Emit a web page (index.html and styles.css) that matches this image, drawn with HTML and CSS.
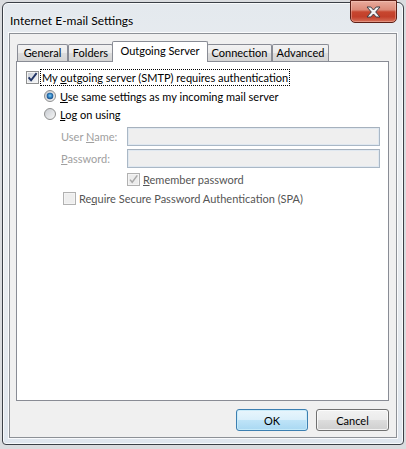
FILE: index.html
```html
<!DOCTYPE html>
<html>
<head>
<meta charset="utf-8">
<title>Internet E-mail Settings</title>
<link rel="stylesheet" href="styles.css">
</head>
<body>
<div class="window">
  <div class="titlebar">
    <span class="title">Internet E-mail Settings</span>
    <div class="close">
      <svg width="15" height="12" viewBox="0 0 15 12">
        <path d="M1 1 H4.8 L7.5 4 L10.2 1 H14 L9.7 6 L14 11 H10.2 L7.5 8 L4.8 11 H1 L5.3 6 Z" fill="#f4f4f4" stroke="#3c3c44" stroke-width="1" stroke-linejoin="round"/>
      </svg>
    </div>
  </div>
  <div class="client">
    <div class="tabs">
      <div class="tab t-general">General</div>
      <div class="tab t-folders">Folders</div>
      <div class="tab active">Outgoing Server</div>
      <div class="tab t-connection">Connection</div>
      <div class="tab t-advanced">Advanced</div>
    </div>
    <div class="panel">
      <div class="row row-auth">
        <svg class="box" width="13" height="13" viewBox="0 0 13 13">
          <defs><linearGradient id="g1" x1="0" y1="0" x2="1" y2="1"><stop offset="0" stop-color="#c9ced6"/><stop offset="1" stop-color="#f5f6f8"/></linearGradient></defs>
          <rect x="0.5" y="0.5" width="12" height="12" fill="#f4f4f4" stroke="#8e8f8f"/>
          <rect x="2" y="2" width="9" height="9" fill="url(#g1)"/>
          <path d="M2.6 6.3 L5.1 9.3 L10.6 2.2" fill="none" stroke="#1f3364" stroke-width="1.9"/>
        </svg>
        <span class="focus">My <u>o</u>utgoing server (SMTP) requires authentication</span>
      </div>
      <div class="row row-radio1">
        <svg class="radio" width="12" height="12" viewBox="0 0 12 12">
          <defs>
            <linearGradient id="g2" x1="0" y1="0" x2="1" y2="1"><stop offset="0" stop-color="#c5c9cf"/><stop offset="1" stop-color="#f6f6f6"/></linearGradient>
            <radialGradient id="g3" cx="0.5" cy="0.45" r="0.6"><stop offset="0" stop-color="#7fd0f6"/><stop offset="0.55" stop-color="#2b77b8"/><stop offset="1" stop-color="#153d73"/></radialGradient>
          </defs>
          <circle cx="6" cy="6" r="5.5" fill="url(#g2)" stroke="#8e8f8f"/>
          <circle cx="6" cy="6" r="3.3" fill="url(#g3)"/>
        </svg>
        <span class="lbl"><u>U</u>se same settings as my incoming mail server</span>
      </div>
      <div class="row row-radio2">
        <svg class="radio" width="12" height="12" viewBox="0 0 12 12">
          <defs><linearGradient id="g4" x1="0" y1="0" x2="1" y2="1"><stop offset="0" stop-color="#c5c9cf"/><stop offset="1" stop-color="#f8f8f8"/></linearGradient></defs>
          <circle cx="6" cy="6" r="5.5" fill="url(#g4)" stroke="#8e8f8f"/>
        </svg>
        <span class="lbl"><u>L</u>og on using</span>
      </div>
      <div class="row row-field row-user">
        <span class="field-label">User <u>N</u>ame:</span>
        <div class="textbox"></div>
      </div>
      <div class="row row-field row-pass">
        <span class="field-label"><u>P</u>assword:</span>
        <div class="textbox"></div>
      </div>
      <div class="row row-remember">
        <svg class="box" width="13" height="13" viewBox="0 0 13 13">
          <rect x="0.5" y="0.5" width="12" height="12" fill="#f4f4f4" stroke="#b1b1b1"/>
          <rect x="2" y="2" width="9" height="9" fill="#ececec"/>
          <path d="M3 6.6 L5.2 9.3 L10.3 2.4" fill="none" stroke="#a8a8a8" stroke-width="1.5"/>
        </svg>
        <span class="lbl dim"><u>R</u>emember password</span>
      </div>
      <div class="row row-spa">
        <svg class="box" width="13" height="13" viewBox="0 0 13 13">
          <rect x="0.5" y="0.5" width="12" height="12" fill="#f4f4f4" stroke="#b1b1b1"/>
          <rect x="2" y="2" width="9" height="9" fill="#eeeeee"/>
        </svg>
        <span class="lbl dim">Re<u>q</u>uire Secure Password Authentication (SPA)</span>
      </div>
    </div>
    <div class="buttons">
      <button class="btn btn-default">OK</button>
      <button class="btn">Cancel</button>
    </div>
  </div>
</div>
</body>
</html>
```

FILE: styles.css
```css
* { box-sizing: border-box; }
html, body { margin: 0; padding: 0; }
body {
  width: 406px;
  height: 449px;
  overflow: hidden;
  background: #dadcdf;
  font-family: Lato, "Noto Sans", sans-serif;
  font-size: 11px;
  color: #000;
}
u { text-decoration: underline; text-underline-offset: 1px; }

.window {
  margin: 2px 2px 0 2px;
  height: 443px;
  border: 1px solid #3b4047;
  border-radius: 6px 6px 4px 4px;
  background: linear-gradient(180deg, #e4e9ee 0%, #eceff2 35%, #e7ebef 70%, #dfe6ee 100%);
  box-shadow: inset 0 0 0 1px rgba(255,255,255,0.75);
  padding: 0 6px 6px 6px;
  display: flex;
  flex-direction: column;
}

.titlebar {
  height: 30px;
  display: flex;
  align-items: flex-start;
  justify-content: space-between;
}
.title {
  font-size: 12px;
  line-height: 15px;
  margin-top: 10px;
  margin-left: 1px;
  text-shadow: 0 0 4px rgba(255,255,255,0.9);
}
.close {
  width: 47px;
  height: 23px;
  margin-top: -3px;
  border: 1px solid #5e2017;
  border-radius: 0 0 5px 5px;
  background: linear-gradient(180deg, #e9ab9d 0%, #dc8a78 42%, #c7462f 52%, #c23f2a 75%, #d6715a 100%);
  box-shadow: inset 0 0 0 1px rgba(255,220,210,0.35);
  display: flex;
  align-items: center;
  justify-content: center;
}

.client {
  height: 405px;
  border: 1px solid #8d9197;
  box-shadow: 0 0 0 1px rgba(255,255,255,0.8);
  background: #f0f0f0;
  padding: 7px 7px 0 6px;
  display: flex;
  flex-direction: column;
}

.tabs {
  height: 20px;
  display: flex;
  align-items: flex-end;
  margin-left: 1px;
  position: relative;
  z-index: 1;
}
.tab {
  height: 17px;
  border: 1px solid #898c95;
  border-bottom: 0;
  border-radius: 2px 2px 0 0;
  text-align: center;
  line-height: 16px;
  background: linear-gradient(180deg, #f2f2f2 0%, #ebebeb 50%, #dddddd 50%, #d4d4d4 100%);
  white-space: nowrap;
}
.t-general { width: 51px; }
.t-folders { width: 45px; }
.t-connection { width: 65px; margin-left: -1px; }
.t-advanced { width: 57px; }
.tab.active {
  width: 96px;
  height: 21px;
  margin-bottom: -1px;
  margin-left: -1px;
  line-height: 17px;
  background: #fff;
  position: relative;
  z-index: 2;
}

.panel {
  height: 340px;
  border: 1px solid #898c95;
  background: #fff;
  display: flex;
  flex-direction: column;
}
.row {
  height: 18px;
  display: flex;
  align-items: center;
  white-space: nowrap;
  line-height: 15px;
}
.box { flex: none; display: block; }
.radio { flex: none; display: block; }

.row-auth { margin-top: 6px; padding-left: 9px; }
.focus {
  margin-left: 1px;
  padding: 0 1px;
  border: 1px dotted #000;
}
.row-radio1 { margin-top: 1px; padding-left: 27px; }
.row-radio2 { padding-left: 27px; }
.row-radio1 .lbl, .row-radio2 .lbl { margin-left: 4px; }

.row-field { height: 19px; padding-left: 44px; }
.row-user { margin-top: 4px; }
.row-pass { margin-top: 3px; }
.field-label { width: 66px; color: #a0a0a0; }
.textbox {
  width: 253px;
  height: 19px;
  border: 1px solid #aab8c6;
  border-top-color: #a6b1bd;
  background: #efefef;
  box-shadow: inset 0 0 0 1px #e0e8f0;
}

.row-remember { margin-top: 2px; padding-left: 110px; }
.row-spa { margin-top: 1px; padding-left: 46px; }
.row-remember .lbl, .row-spa .lbl { margin-left: 3px; }
.dim { color: #555; }

.buttons {
  margin-top: 8px;
  display: flex;
  justify-content: flex-end;
  gap: 8px;
}
.btn {
  height: 22px;
  width: 73px;
  font-family: Lato, "Noto Sans", sans-serif;
  font-size: 11px;
  color: #000;
  border: 1px solid #707070;
  border-radius: 3px;
  background: linear-gradient(180deg, #f2f2f2 0%, #ebebeb 50%, #dddddd 50%, #cfcfcf 100%);
  box-shadow: inset 0 0 0 1px rgba(255,255,255,0.75);
  padding: 0;
}
.btn-default {
  width: 72px;
  border-color: #3c7fb1;
  background: linear-gradient(180deg, #e8f5fc 0%, #d9effb 50%, #bfe4f8 50%, #a9d8f2 100%);
  box-shadow: inset 0 0 0 1px rgba(200,235,250,0.9);
}
```
